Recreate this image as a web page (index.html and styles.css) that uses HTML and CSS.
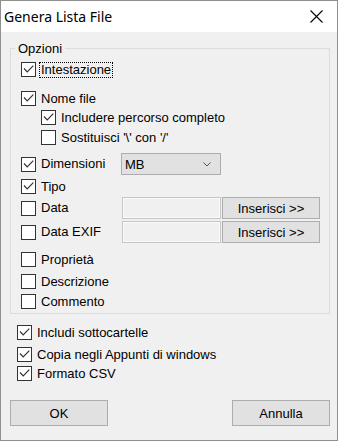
FILE: index.html
```html
<!DOCTYPE html>
<html lang="it">
<head>
    <meta charset="UTF-8">
    <title>Genera Lista File</title>
    <link rel="stylesheet" href="styles.css">
</head>
<body>
    <div class="window">
        <!-- Title bar -->
        <div class="titlebar">
            <span class="title">Genera Lista File</span>
            <svg class="close" viewBox="0 0 13 13"><path d="M0.5 0.5 L12.5 12.5 M12.5 0.5 L0.5 12.5" stroke="#000" stroke-width="1.1" fill="none"/></svg>
        </div>

        <div class="dialog">
            <!-- Options group -->
            <fieldset class="group">
                <legend>Opzioni</legend>

                <div class="row">
                    <span class="chk"><svg viewBox="0 0 13 13"><path d="M2 5.5 L5.2 8.8 L11.3 2.6"/></svg></span>
                    <span class="lbl focus">Intestazione</span>
                </div>

                <div class="row row-name">
                    <span class="chk"><svg viewBox="0 0 13 13"><path d="M2 5.5 L5.2 8.8 L11.3 2.6"/></svg></span>
                    <span class="lbl">Nome file</span>
                </div>
                <div class="row row-sub row-path">
                    <span class="chk"><svg viewBox="0 0 13 13"><path d="M2 5.5 L5.2 8.8 L11.3 2.6"/></svg></span>
                    <span class="lbl">Includere percorso completo</span>
                </div>
                <div class="row row-sub row-slash">
                    <span class="chk"></span>
                    <span class="lbl">Sostituisci '\' con '/'</span>
                </div>

                <div class="row row-tall row-size">
                    <div class="opt opt-combo">
                        <span class="chk"><svg viewBox="0 0 13 13"><path d="M2 5.5 L5.2 8.8 L11.3 2.6"/></svg></span>
                        <span class="lbl">Dimensioni</span>
                    </div>
                    <div class="combo">
                        <span>MB</span>
                        <svg class="arrow" viewBox="0 0 8 5"><path d="M0.5 0.5 L4 4 L7.5 0.5"/></svg>
                    </div>
                </div>

                <div class="row row-type">
                    <span class="chk"><svg viewBox="0 0 13 13"><path d="M2 5.5 L5.2 8.8 L11.3 2.6"/></svg></span>
                    <span class="lbl">Tipo</span>
                </div>

                <div class="row row-tall row-date">
                    <div class="opt opt-field">
                        <span class="chk"></span>
                        <span class="lbl">Data</span>
                    </div>
                    <div class="field"></div>
                    <button class="btn btn-insert">Inserisci &gt;&gt;</button>
                </div>
                <div class="row row-tall row-exif">
                    <div class="opt opt-field">
                        <span class="chk"></span>
                        <span class="lbl">Data EXIF</span>
                    </div>
                    <div class="field"></div>
                    <button class="btn btn-insert">Inserisci &gt;&gt;</button>
                </div>

                <div class="row row-props">
                    <span class="chk"></span>
                    <span class="lbl">Proprietà</span>
                </div>
                <div class="row row-desc">
                    <span class="chk"></span>
                    <span class="lbl">Descrizione</span>
                </div>
                <div class="row row-comment">
                    <span class="chk"></span>
                    <span class="lbl">Commento</span>
                </div>
            </fieldset>

            <!-- General options -->
            <div class="row row-out row-subdirs">
                <span class="chk"><svg viewBox="0 0 13 13"><path d="M2 5.5 L5.2 8.8 L11.3 2.6"/></svg></span>
                <span class="lbl">Includi sottocartelle</span>
            </div>
            <div class="row row-out row-clip">
                <span class="chk"><svg viewBox="0 0 13 13"><path d="M2 5.5 L5.2 8.8 L11.3 2.6"/></svg></span>
                <span class="lbl">Copia negli Appunti di windows</span>
            </div>
            <div class="row row-out row-csv">
                <span class="chk"><svg viewBox="0 0 13 13"><path d="M2 5.5 L5.2 8.8 L11.3 2.6"/></svg></span>
                <span class="lbl">Formato CSV</span>
            </div>

            <div class="actions">
                <button class="btn btn-main">OK</button>
                <button class="btn btn-main">Annulla</button>
            </div>
        </div>
    </div>
</body>
</html>
```

FILE: styles.css
```css
/* Reset */
* {
    margin: 0;
    padding: 0;
    box-sizing: border-box;
}

body {
    font-family: 'Liberation Sans', Arial, sans-serif;
    font-size: 13px;
    color: #000;
    background: #fff;
}

/* Window frame */
.window {
    width: 338px;
    height: 441px;
    border: 1px solid #8f8f8f;
    background: #f0f0f0;
    display: flex;
    flex-direction: column;
}

.titlebar {
    height: 31px;
    flex: none;
    background: #fff;
    display: flex;
    align-items: center;
    justify-content: space-between;
    padding: 0 14px 0 3px;
}

.title {
    font-family: 'Noto Sans', sans-serif;
    font-size: 14px;
}

.close {
    width: 13px;
    height: 13px;
}

.dialog {
    flex: 1;
    padding: 0 7px 0 9px;
}

/* Group box */
.group {
    margin-top: 9px;
    border: 1px solid #dcdcdc;
    padding: 6px 8px 4px 10px;
    min-width: 0;
}

.group legend {
    margin-left: -6px;
    padding: 0 3px;
    line-height: 15px;
}

/* Checkbox rows */
.row {
    display: flex;
    align-items: center;
    height: 15px;
}

.row-tall {
    height: 22px;
}

.opt {
    display: flex;
    align-items: center;
    flex: none;
}

.opt-combo {
    width: 100px;
}

.opt-field {
    width: 101px;
}

.chk {
    width: 15px;
    height: 15px;
    flex: none;
    border: 1px solid #333;
    background: #fff;
}

.chk svg {
    display: block;
    width: 13px;
    height: 13px;
    fill: none;
    stroke: #333;
    stroke-width: 1.2;
}

.lbl {
    margin-left: 3px;
    padding: 0 1px;
    border: 1px dotted transparent;
    line-height: 14px;
    white-space: nowrap;
}

.lbl.focus {
    border-color: #000;
}

.row-sub {
    margin-left: 20px;
}

.row-name { margin-top: 14px; }
.row-path { margin-top: 4px; }
.row-slash { margin-top: 5px; }
.row-size { margin-top: 8px; }
.row-type { margin-top: 4px; }
.row-date { margin-top: 3px; }
.row-exif { margin-top: 2px; }
.row-props { margin-top: 9px; }
.row-desc { margin-top: 7px; }
.row-comment { margin-top: 5px; }

.row-out {
    margin-left: 7px;
}

.row-subdirs { margin-top: 11px; }
.row-clip { margin-top: 7px; }
.row-csv { margin-top: 4px; }

/* Controls */
.combo {
    width: 100px;
    height: 22px;
    border: 1px solid #adadad;
    background: #e1e1e1;
    display: flex;
    align-items: center;
    justify-content: space-between;
    padding: 0 9px 0 3px;
}

.arrow {
    width: 8px;
    height: 5px;
    fill: none;
    stroke: #555;
    stroke-width: 1;
}

.field {
    width: 99px;
    height: 22px;
    border: 1px solid #c6c6c6;
    box-shadow: inset 0 0 0 1px #fafafa;
    background: #f0f0f0;
}

.btn {
    font-family: inherit;
    font-size: 13px;
    color: #000;
    background: #e1e1e1;
    border: 1px solid #adadad;
}

.btn-insert {
    width: 98px;
    height: 22px;
    margin-left: 1px;
}

.actions {
    display: flex;
    justify-content: space-between;
    margin-top: 19px;
}

.btn-main {
    width: 98px;
    height: 26px;
}
```
